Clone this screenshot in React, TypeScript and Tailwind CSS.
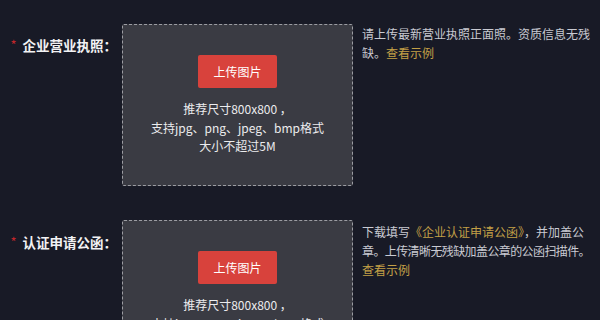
import React from 'react';

const hints = ['推荐尺寸800x800 ，', '支持jpg、png、jpeg、bmp格式', '大小不超过5M'];

function UploadBox() {
  return (
    <div className="w-[231px] h-[162px] shrink-0 rounded-[2px] border border-dashed border-[#9c9da3] bg-[#3a3b43] flex flex-col items-center pt-[30px]">
      <button className="w-[79px] h-[33px] rounded-[2px] bg-[#d8423c] text-[12px] text-white">
        上传图片
      </button>
      <div className="mt-[12px] text-center text-[12px] leading-[18.5px] text-[#ececee]">
        {hints.map((h) => (
          <div key={h}>{h}</div>
        ))}
      </div>
    </div>
  );
}

function Field({ label, children, labelTop }: { label: string; children: React.ReactNode; labelTop: string }) {
  return (
    <div className="flex">
      <div className={`w-[122px] shrink-0 flex justify-end pr-[5px] ${labelTop}`}>
        <span className="text-[#c0262b] text-[13px] leading-[20px] mr-[6px]">*</span>
        <span className="text-[13.5px] leading-[20px] font-semibold text-[#f2f2f4]">{label}</span>
      </div>
      <UploadBox />
      <div className="ml-[9px] w-[236px] whitespace-nowrap text-[12px] leading-[19px] text-[#c9cad2]">{children}</div>
    </div>
  );
}

export default function App() {
  return (
    <div
      className="w-[600px] h-[320px] overflow-hidden bg-[#181a26] flex flex-col gap-[34px] pt-[24px]"
      style={{ fontFamily: '"Noto Sans CJK SC", "Noto Sans", sans-serif' }}
    >
      <Field label="企业营业执照：" labelTop="pt-[11px]">
        <div>请上传最新营业执照正面照。资质信息无残</div>
        <div>
          缺。<span className="text-[#c3a046]">查看示例</span>
        </div>
      </Field>
      <Field label="认证申请公函：" labelTop="pt-[12px]">
        <div className="pt-[2px]">
          下载填写<span className="text-[#c3a046]">《企业认证申请公函》</span>，并加盖公
        </div>
        <div className="tracking-[-0.6px]">章。上传清晰无残缺加盖公章的公函扫描件。</div>
        <div className="text-[#c3a046]">查看示例</div>
      </Field>
    </div>
  );
}
